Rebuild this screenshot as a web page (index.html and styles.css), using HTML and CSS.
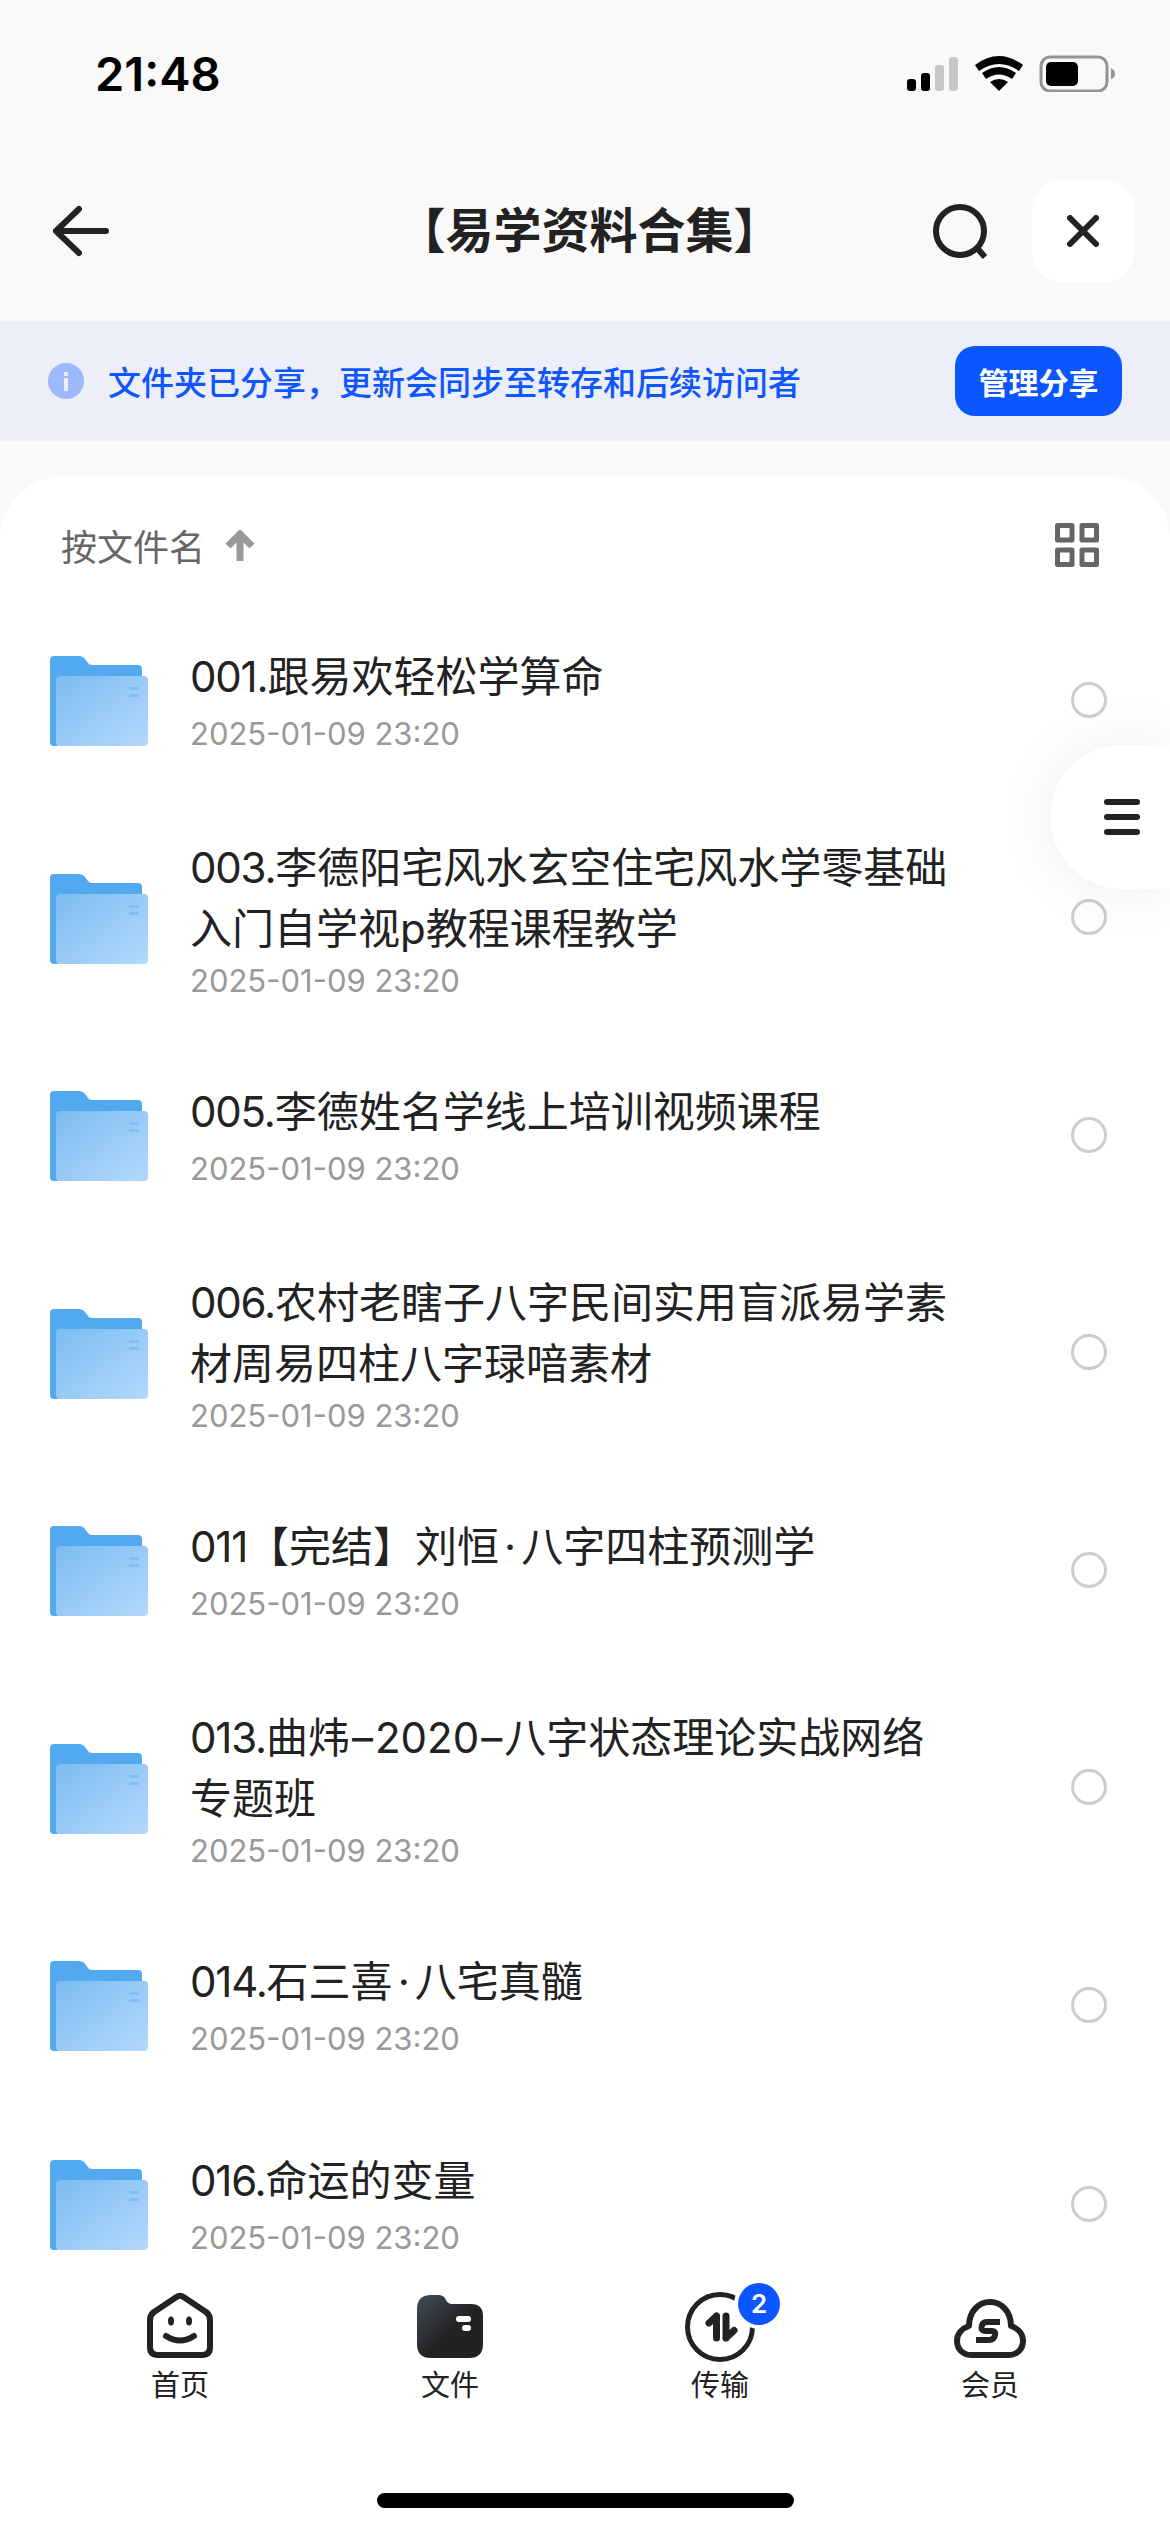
FILE: index.html
```html
<!DOCTYPE html>
<html lang="zh-CN">
<head>
    <meta charset="UTF-8">
    <meta name="viewport" content="width=device-width, initial-scale=1.0">
    <title>【易学资料合集】</title>
    <link rel="stylesheet" href="styles.css">
</head>
<body>
    <svg class="sprite" width="0" height="0">
        <defs>
            <linearGradient id="folderFront" x1="0" y1="0" x2="1" y2="1">
                <stop offset="0" stop-color="#7cbcf0"/>
                <stop offset="1" stop-color="#b3d9fc"/>
            </linearGradient>
            <linearGradient id="filesFill" x1="0" y1="0" x2="1" y2="1">
                <stop offset="0" stop-color="#414d59"/>
                <stop offset="0.55" stop-color="#222"/>
                <stop offset="1" stop-color="#222"/>
            </linearGradient>
            <symbol id="folder" viewBox="0 0 98 90">
                <path fill="#52a9f0" d="M4 0H28Q33 0 35 3L38 7Q39 9 42 9H88Q92 9 92 13V40H6V90H4Q0 90 0 86V4Q0 0 4 0Z"/>
                <rect x="4" y="40" width="4" height="50" fill="#52a9f0"/>
                <rect x="6" y="20" width="92" height="70" rx="4" fill="url(#folderFront)"/>
                <rect x="79" y="31" width="10" height="3" fill="#7fbff4"/>
                <rect x="79" y="38" width="10" height="3" fill="#7fbff4"/>
            </symbol>
        </defs>
    </svg>

    <div class="phone">
        <div class="status-bar">
            <span class="time">21:48</span>
            <svg class="status-icons" width="208" height="37" viewBox="0 0 208 37">
                <rect x="0" y="24" width="9" height="12" rx="3" fill="#000"/>
                <rect x="14" y="18" width="9" height="18" rx="3" fill="#000"/>
                <rect x="28" y="10" width="9" height="26" rx="3" fill="#c6c6c6"/>
                <rect x="42" y="2" width="9" height="34" rx="3" fill="#c6c6c6"/>
                <path d="M68 10Q92 -8 116 10L112 16Q92 2 72 16Z" fill="#000"/>
                <path d="M75 18Q92 6 109 18L105 24Q92 15 79 24Z" fill="#000"/>
                <path d="M83 27Q92 21 101 27L92 36Z" fill="#000"/>
                <rect x="134" y="2" width="66" height="34" rx="9" fill="none" stroke="#949494" stroke-width="3"/>
                <rect x="139" y="7" width="32" height="24" rx="5" fill="#000"/>
                <path d="M204 13Q208 15 208 19Q208 23 204 24Z" fill="#949494"/>
            </svg>
        </div>

        <header class="top-bar">
            <div class="top-left">
                <svg width="80" height="80" viewBox="0 0 80 80" fill="none" stroke="#222" stroke-width="6" stroke-linecap="round" stroke-linejoin="round">
                    <path d="M39 18L16 40L39 62M16 40H66"/>
                </svg>
            </div>
            <h1 class="page-title">【易学资料合集】</h1>
            <div class="top-right">
                <svg width="60" height="60" viewBox="0 0 60 60" fill="none" stroke="#222" stroke-width="6">
                    <circle cx="30" cy="30" r="24"/>
                    <path d="M47 47L55 56"/>
                </svg>
                <button class="close-btn">
                    <svg width="32" height="32" viewBox="0 0 32 32" fill="none" stroke="#222" stroke-width="6" stroke-linecap="round">
                        <path d="M3 3L29 29M29 3L3 29"/>
                    </svg>
                </button>
            </div>
        </header>

        <div class="share-banner">
            <svg width="36" height="36" viewBox="0 0 36 36">
                <circle cx="18" cy="18" r="18" fill="#9db8fb"/>
                <rect x="16" y="9" width="4" height="4" fill="#eceefa"/>
                <rect x="16" y="15" width="4" height="13" fill="#eceefa"/>
            </svg>
            <span class="share-text">文件夹已分享，更新会同步至转存和后续访问者</span>
            <button class="share-btn">管理分享</button>
        </div>

        <main class="sheet">
            <div class="sort-row">
                <span class="sort-label">按文件名</span>
                <svg width="30" height="31" viewBox="0 0 30 31" fill="none" stroke="#999" stroke-width="7">
                    <path d="M15 31V4M3 16L15 4L27 16"/>
                </svg>
                <svg class="grid-icon" width="44" height="44" viewBox="0 0 44 44" fill="none" stroke="#666" stroke-width="5" stroke-linejoin="round">
                    <rect x="2.500" y="2.500" width="14.500" height="14.500"/>
                    <rect x="27" y="2.500" width="14.500" height="14.500"/>
                    <rect x="2.500" y="27" width="14.500" height="14.500"/>
                    <rect x="27" y="27" width="14.500" height="14.500"/>
                </svg>
            </div>

            <ul class="file-list">
                <li class="file-row">
                    <svg class="folder-icon"><use href="#folder"/></svg>
                    <div class="file-body">
                        <div class="file-name"><span class="file-no">001.</span>跟易欢轻松学算命</div>
                        <div class="file-date">2025-01-09 23:20</div>
                    </div>
                    <span class="radio"></span>
                </li>
                <li class="file-row file-row-wrap">
                    <svg class="folder-icon"><use href="#folder"/></svg>
                    <div class="file-body">
                        <div class="file-name"><span class="file-no">003.</span>李德阳宅风水玄空住宅风水学零基础</div>
                        <div class="file-name">入门自学视p教程课程教学</div>
                        <div class="file-date">2025-01-09 23:20</div>
                    </div>
                    <span class="radio"></span>
                </li>
                <li class="file-row">
                    <svg class="folder-icon"><use href="#folder"/></svg>
                    <div class="file-body">
                        <div class="file-name"><span class="file-no">005.</span>李德姓名学线上培训视频课程</div>
                        <div class="file-date">2025-01-09 23:20</div>
                    </div>
                    <span class="radio"></span>
                </li>
                <li class="file-row file-row-wrap">
                    <svg class="folder-icon"><use href="#folder"/></svg>
                    <div class="file-body">
                        <div class="file-name"><span class="file-no">006.</span>农村老瞎子八字民间实用盲派易学素</div>
                        <div class="file-name">材周易四柱八字琭喑素材</div>
                        <div class="file-date">2025-01-09 23:20</div>
                    </div>
                    <span class="radio"></span>
                </li>
                <li class="file-row">
                    <svg class="folder-icon"><use href="#folder"/></svg>
                    <div class="file-body">
                        <div class="file-name"><span class="file-no">011</span>【完结】刘恒<span class="sep">·</span>八字四柱预测学</div>
                        <div class="file-date">2025-01-09 23:20</div>
                    </div>
                    <span class="radio"></span>
                </li>
                <li class="file-row file-row-wrap">
                    <svg class="folder-icon"><use href="#folder"/></svg>
                    <div class="file-body">
                        <div class="file-name"><span class="file-no">013.</span>曲炜<span class="sep-dash">–</span>2020<span class="sep-dash">–</span>八字状态理论实战网络</div>
                        <div class="file-name">专题班</div>
                        <div class="file-date">2025-01-09 23:20</div>
                    </div>
                    <span class="radio"></span>
                </li>
                <li class="file-row">
                    <svg class="folder-icon"><use href="#folder"/></svg>
                    <div class="file-body">
                        <div class="file-name"><span class="file-no">014.</span>石三喜<span class="sep">·</span>八宅真髓</div>
                        <div class="file-date">2025-01-09 23:20</div>
                    </div>
                    <span class="radio"></span>
                </li>
                <li class="file-row file-row-short">
                    <svg class="folder-icon"><use href="#folder"/></svg>
                    <div class="file-body">
                        <div class="file-name"><span class="file-no">016.</span>命运的变量</div>
                        <div class="file-date">2025-01-09 23:20</div>
                    </div>
                    <span class="radio"></span>
                </li>
            </ul>
        </main>

        <nav class="tab-bar">
            <div class="tabs">
                <div class="tab">
                    <div class="tab-icon">
                        <svg width="66" height="66" viewBox="0 0 66 66" fill="none" stroke="#222" stroke-width="6" stroke-linecap="round" stroke-linejoin="round">
                            <path d="M29.500 5Q33 2.500 36.500 5L59 20Q63 23 63 28V55Q63 63 55 63H11Q3 63 3 55V28Q3 23 7 20Z"/>
                            <path d="M19 44Q33 53 47 44"/>
                            <ellipse cx="24" cy="29" rx="3" ry="4.500" fill="#222" stroke="none"/>
                            <ellipse cx="42" cy="29" rx="3" ry="4.500" fill="#222" stroke="none"/>
                        </svg>
                    </div>
                    <span class="tab-label">首页</span>
                </div>
                <div class="tab">
                    <div class="tab-icon">
                        <svg width="66" height="63" viewBox="0 0 66 63">
                            <path fill="url(#filesFill)" d="M14 0H21Q27 0 29 5Q31 9 35 9H54Q66 9 66 21V49Q66 63 52 63H14Q0 63 0 49V14Q0 0 14 0Z"/>
                            <rect x="39" y="21" width="15" height="6" rx="3" fill="#fff"/>
                            <rect x="45" y="30" width="9" height="6" rx="3" fill="#fff"/>
                        </svg>
                    </div>
                    <span class="tab-label">文件</span>
                </div>
                <div class="tab">
                    <div class="tab-icon">
                        <svg class="transfer-icon" width="70" height="70" viewBox="0 0 70 70" fill="none" stroke="#222">
                            <circle cx="35" cy="35" r="32.500" stroke-width="5"/>
                            <path d="M31.500 24V46M31.500 24L24 31M41 24V46M41 46L49 38.500" stroke-width="7" stroke-linecap="round" stroke-linejoin="round"/>
                        </svg>
                        <span class="badge">2</span>
                    </div>
                    <span class="tab-label">传输</span>
                </div>
                <div class="tab">
                    <div class="tab-icon">
                        <svg width="72" height="59" viewBox="0 0 72 59" fill="none" stroke="#222" stroke-width="6" stroke-linejoin="round">
                            <path d="M17 56H55C63 56 69 50 69 42C69 34 63 29 57 27C57 12 47 3 36 3C25 3 15 12 15 27C9 29 3 34 3 42C3 50 9 56 17 56Z"/>
                            <path d="M46 23H33Q28 23 27.500 28Q27 32 32 32H38Q42 32 41 36Q40 41 35 41H22"/>
                        </svg>
                    </div>
                    <span class="tab-label">会员</span>
                </div>
            </div>
            <div class="home-indicator"></div>
        </nav>

        <div class="float-menu">
            <span></span>
            <span></span>
            <span></span>
        </div>
    </div>
</body>
</html>
```

FILE: styles.css
```css
* {
    margin: 0;
    padding: 0;
    box-sizing: border-box;
    font-family: Inter, "Noto Sans CJK SC", sans-serif;
}

body {
    background: #f9f9f9;
    color: #222;
}

.sprite {
    display: block;
    position: absolute;
}

.phone {
    position: relative;
    width: 1170px;
    height: 2532px;
    overflow: hidden;
    display: flex;
    flex-direction: column;
}

/* status bar */
.status-bar {
    height: 180px;
    padding: 50px 55px 0 95px;
    display: flex;
    justify-content: space-between;
    align-items: flex-start;
}

.time {
    font-size: 47px;
    line-height: 48px;
    font-weight: 600;
    color: #000;
}

.status-icons {
    margin-top: 5px;
}

/* header */
.top-bar {
    height: 102px;
    margin-bottom: 39px;
    padding: 0 36px 0 45px;
    display: grid;
    grid-template-columns: 1fr auto 1fr;
    align-items: center;
}

.top-left {
    display: flex;
    margin-left: -5px;
}

.page-title {
    font-size: 48px;
    font-weight: 600;
    line-height: 60px;
}

.top-right {
    display: flex;
    justify-content: flex-end;
    align-items: center;
    gap: 42px;
}

.close-btn {
    width: 102px;
    height: 102px;
    border: none;
    border-radius: 30px;
    background: #fff;
    display: flex;
    align-items: center;
    justify-content: center;
}

/* share banner */
.share-banner {
    height: 120px;
    padding: 0 48px;
    background: #eceefa;
    display: flex;
    align-items: center;
    gap: 24px;
}

.share-text {
    font-size: 33px;
    font-weight: 500;
    color: #0f56ff;
}

.share-btn {
    margin-left: auto;
    width: 167px;
    height: 70px;
    border: none;
    border-radius: 20px;
    background: #0c56ff;
    color: #fff;
    font-size: 30px;
    font-weight: 700;
}

/* list sheet */
.sheet {
    flex: 1;
    min-height: 0;
    margin-top: 35px;
    background: #fff;
    border-radius: 64px 64px 0 0;
    overflow: hidden;
}

.sort-row {
    padding: 44px 71px 21px 61px;
    height: 115px;
    display: flex;
    align-items: center;
    gap: 20px;
}

.sort-label {
    font-size: 36px;
    color: #666;
}

.grid-icon {
    margin-left: auto;
}

.file-list {
    list-style: none;
}

.file-row {
    height: 217.5px;
    padding: 0 63px 0 50px;
    display: flex;
    align-items: center;
    gap: 42px;
}

.file-row-short {
    height: 180px;
}

.folder-icon {
    width: 98px;
    height: 90px;
    margin-top: 3px;
    flex-shrink: 0;
}

.file-body {
    width: 770px;
}

.file-name {
    font-size: 42px;
    line-height: 61px;
}

.file-no {
    letter-spacing: -1.2px;
}

.sep {
    margin: 0 5px;
}

.sep-dash {
    margin: 0 2px;
}

.file-date {
    margin-top: 7px;
    font-size: 31px;
    line-height: 40px;
    color: #999;
}

.file-row-wrap .file-body {
    margin-top: 4px;
}

.file-row-wrap .file-date {
    margin-top: 2px;
}

.radio {
    margin-left: auto;
    width: 36px;
    height: 36px;
    border: 3px solid #ccccd4;
    border-radius: 50%;
}

/* tab bar */
.tab-bar {
    height: 277px;
    padding-top: 35px;
    background: #fff;
    display: flex;
    flex-direction: column;
    align-items: center;
}

.tabs {
    width: 1080px;
    display: grid;
    grid-template-columns: repeat(4, 1fr);
}

.tab {
    display: flex;
    flex-direction: column;
    align-items: center;
}

.tab-icon {
    position: relative;
    height: 68px;
    display: flex;
    align-items: flex-end;
}

.transfer-icon {
    margin-bottom: -4px;
}

.badge {
    position: absolute;
    top: -7px;
    left: 53px;
    width: 42px;
    height: 42px;
    border-radius: 50%;
    background: #0c56ff;
    box-shadow: 0 0 0 4px #fff;
    color: #fff;
    font-size: 26px;
    font-weight: 600;
    line-height: 42px;
    text-align: center;
}

.tab-label {
    font-size: 29px;
    line-height: 40px;
    margin-top: 8px;
}

.home-indicator {
    width: 417px;
    height: 15px;
    margin-top: auto;
    margin-bottom: 24px;
    border-radius: 8px;
    background: #000;
}

/* floating menu */
.float-menu {
    position: absolute;
    top: 745px;
    right: 0;
    width: 120px;
    height: 144px;
    padding-left: 54px;
    border-radius: 72px 0 0 72px;
    background: #fff;
    box-shadow: 0 0 60px rgba(0, 0, 0, 0.08);
    display: flex;
    flex-direction: column;
    justify-content: center;
    gap: 9px;
}

.float-menu span {
    width: 36px;
    height: 6px;
    border-radius: 3px;
    background: #222;
}
```
